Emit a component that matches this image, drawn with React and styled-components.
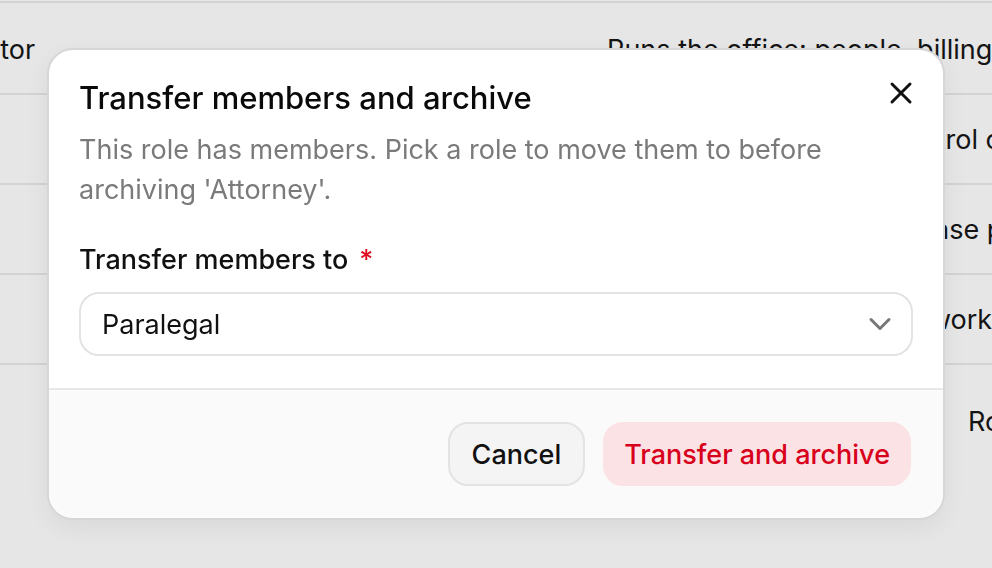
import React from 'react';
import styled, { createGlobalStyle } from 'styled-components';
import { X, ChevronDown } from 'lucide-react';

const GlobalStyle = createGlobalStyle`
  html, body {
    margin: 0;
    padding: 0;
    background: #e6e6e6;
    font-family: Inter, "Noto Sans", sans-serif;
    overflow: hidden;
  }
`;

const Page = styled.div`
  width: 992px;
  height: 568px;
  overflow: hidden;
  background: #e6e6e6;
`;

const Table = styled.div`
  margin-left: -136px;
  padding-top: 2px;
  border-top: 2px solid #d3d3d3;
  margin-top: 1px;
`;

const Row = styled.div`
  display: grid;
  grid-template-columns: 743px 1fr;
  align-items: center;
  height: ${props => props.tall ? '112px' : '88px'};
  border-bottom: ${props => props.last ? 'none' : '2px solid #d3d3d3'};
  color: #141414;
  font-size: 27px;
  white-space: nowrap;
`;

const Cell = styled.span`
  overflow: hidden;
  padding-left: ${props => props.indent || 0}px;
`;

const Overlay = styled.div`
  position: fixed;
  inset: 0;
  display: flex;
  align-items: center;
  justify-content: center;
`;

const Dialog = styled.div`
  position: relative;
  width: 898px;
  background: #ffffff;
  border: 2px solid #d6d6d6;
  border-radius: 26px;
  box-shadow: 0 8px 24px rgba(0, 0, 0, 0.06);
  overflow: hidden;
  box-sizing: border-box;
`;

const Header = styled.div`
  padding: 24px 30px 0 30px;
`;

const Title = styled.h2`
  margin: 0;
  font-size: 31px;
  line-height: 48px;
  font-weight: 500;
  color: #0a0a0a;
`;

const Description = styled.p`
  margin: 8px 0 0 0;
  font-size: 27px;
  line-height: 40px;
  color: #7a7a7a;
  max-width: 780px;
`;

const CloseButton = styled.button`
  position: absolute;
  top: 23px;
  right: 22px;
  width: 40px;
  height: 40px;
  display: flex;
  align-items: center;
  justify-content: center;
  padding: 0;
  border: none;
  background: transparent;
  color: #111;
`;

const Body = styled.div`
  padding: 30px 30px 32px 30px;
  display: flex;
  flex-direction: column;
  gap: 12px;
`;

const Label = styled.label`
  font-size: 27px;
  line-height: 40px;
  font-weight: 500;
  color: #111;
`;

const Required = styled.span`
  color: #e0101e;
  margin-left: 11px;
`;

const Select = styled.div`
  display: flex;
  align-items: center;
  justify-content: space-between;
  height: 64px;
  box-sizing: border-box;
  padding: 0 13px 0 21px;
  border: 2px solid #e3e3e3;
  border-radius: 20px;
  font-size: 27px;
  color: #111;
  background: #fff;
`;

const Footer = styled.div`
  display: flex;
  justify-content: flex-end;
  gap: 18px;
  padding: 32px 32px 32px 32px;
  background: #fafafa;
  border-top: 2px solid #e8e8e8;
`;

const Button = styled.button`
  height: 64px;
  padding: 0 ${props => props.danger ? '19px' : '22px'};
  border-radius: 20px;
  font-family: inherit;
  font-size: 27px;
  font-weight: 500;
  border: 2px solid ${props => props.danger ? '#fbe2e4' : '#e3e3e3'};
  background: ${props => props.danger ? '#fbe2e4' : '#f4f4f4'};
  color: ${props => props.danger ? '#d8001b' : '#111'};
`;

const rows = [
  ['Administrator', 'Runs the office: people, billing, settings and roles'],
  ['Attorney', 'Runs matters with full control of billing'],
  ['Paralegal', 'Supports attorneys with case prep and filings'],
  ['Staff', 'Calendars, intake, admin work'],
];

const App = () => (
  <Page>
    <GlobalStyle />
    <Table>
      {rows.map(([name, desc]) => (
        <Row key={name}>
          <Cell>{name}</Cell>
          <Cell>{desc}</Cell>
        </Row>
      ))}
      <Row tall last>
        <Cell>Read-only</Cell>
        <Cell indent={361}>Roles</Cell>
      </Row>
    </Table>
    <Overlay>
      <Dialog>
        <Header>
          <Title>Transfer members and archive</Title>
          <Description>
            This role has members. Pick a role to move them to before archiving 'Attorney'.
          </Description>
        </Header>
        <CloseButton aria-label="Close">
          <X size={36} strokeWidth={2} />
        </CloseButton>
        <Body>
          <Label>
            Transfer members to<Required>*</Required>
          </Label>
          <Select>
            <span>Paralegal</span>
            <ChevronDown size={36} strokeWidth={2} color="#777" />
          </Select>
        </Body>
        <Footer>
          <Button>Cancel</Button>
          <Button danger>Transfer and archive</Button>
        </Footer>
      </Dialog>
    </Overlay>
  </Page>
);

export default App;
